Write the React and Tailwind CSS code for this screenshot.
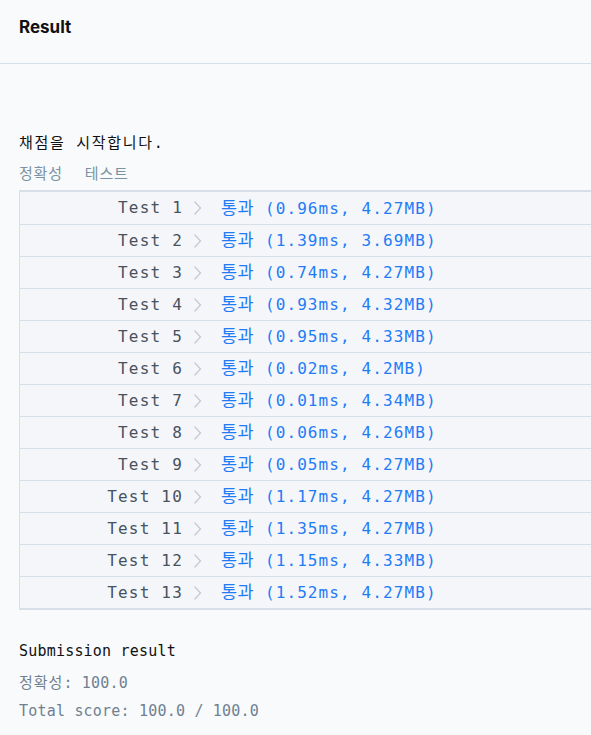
import React from "react";

const mono = { fontFamily: '"DejaVu Sans Mono", "Noto Sans CJK KR", monospace' };

const results = [
  ["0.96ms", "4.27MB"],
  ["1.39ms", "3.69MB"],
  ["0.74ms", "4.27MB"],
  ["0.93ms", "4.32MB"],
  ["0.95ms", "4.33MB"],
  ["0.02ms", "4.2MB"],
  ["0.01ms", "4.34MB"],
  ["0.06ms", "4.26MB"],
  ["0.05ms", "4.27MB"],
  ["1.17ms", "4.27MB"],
  ["1.35ms", "4.27MB"],
  ["1.15ms", "4.33MB"],
  ["1.52ms", "4.27MB"],
];

const Chevron = () => (
  <svg width="9" height="16" viewBox="0 0 9 16" className="shrink-0">
    <path d="M1.5 1.5 L7.5 8 L1.5 14.5" fill="none" stroke="#c3c8cf" strokeWidth="1.2" />
  </svg>
);

export default function App() {
  return (
    <div className="min-h-[735px] w-[591px] overflow-hidden bg-[#f9fafc]">
      <div className="h-[64px] border-b border-[#d7e0e8] px-[19px] pt-[15px]">
        <h1
          className="text-[17px] font-bold leading-[24px] text-[#111]"
          style={{ fontFamily: "Inter, sans-serif" }}
        >
          Result
        </h1>
      </div>

      <div className="pl-[19px] pt-[68px]" style={mono}>
        <p className="text-[15px] leading-[22px] tracking-[1.7px] text-[#111]">채점을 시작합니다.</p>
        <p className="mt-[10px] flex text-[15px] leading-[20px] tracking-[0.8px] text-[#7a93a3]">
          <span>정확성</span>
          <span className="ml-[22px]">테스트</span>
        </p>

        <div className="mt-[6px] w-[600px] border-t-2 border-l border-b-2 border-[#d7e0e8] bg-[#f5f6fa]">
          {results.map(([ms, mb], i) => (
            <div
              key={i}
              className={`flex h-[32px] items-center ${i > 0 ? "border-t border-[#d7e0e8]" : ""}`}
            >
              <div className="w-[163px] text-right text-[16px] tracking-[1.2px] text-[#48525e]">
                Test {i + 1}
              </div>
              <div className="ml-[10px]">
                <Chevron />
              </div>
              <div className="ml-[19px] whitespace-pre text-[16px] tracking-[1.1px] text-[#1f7cf7]">
                <span className="text-[17.5px] tracking-[0.5px]">통과</span> ({ms}, {mb})
              </div>
            </div>
          ))}
        </div>

        <p className="mt-[30px] text-[15px] leading-[22px] tracking-[0.2px] text-[#111]">Submission result</p>
        <p className="mt-[10px] text-[15px] leading-[22px] tracking-[0.2px] text-[#6f8190]">
          <span className="tracking-[1px]">정확성</span>: 100.0
        </p>
        <p className="mt-[6px] text-[15px] leading-[22px] tracking-[0.2px] text-[#6f8190]">Total score: 100.0 / 100.0</p>
      </div>
    </div>
  );
}
